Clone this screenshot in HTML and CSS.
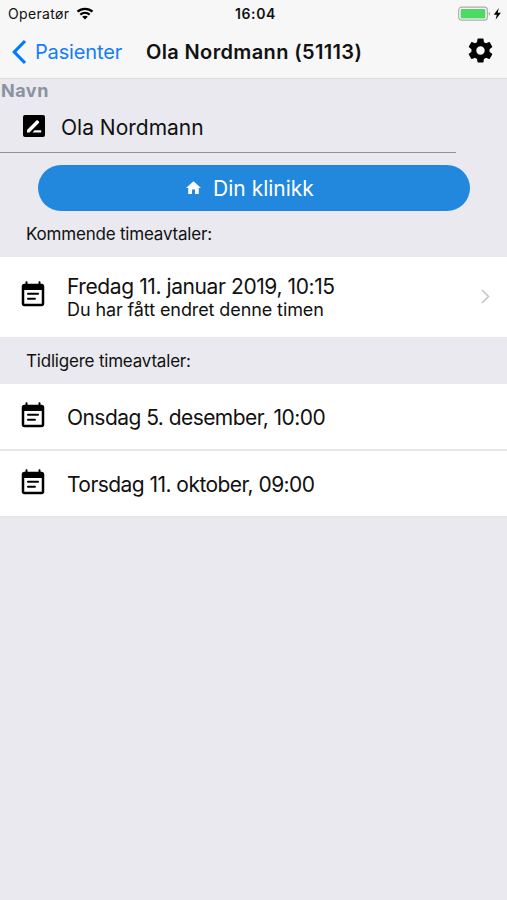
FILE: index.html
```html
<!DOCTYPE html>
<html lang="no">
<head>
  <meta charset="UTF-8" />
  <meta name="viewport" content="width=device-width, initial-scale=1" />
  <title>Ola Nordmann (51113)</title>
  <link rel="stylesheet" href="styles.css">
</head>
<body>

  <svg class="symbols">
    <symbol id="event" viewBox="0 0 24 24">
      <path d="M19 3h-1V1.6c0-.8-1.6-.8-1.6 0V3H7.6V1.6c0-.8-1.6-.8-1.6 0V3H5c-1.100 0-2 .9-2 2v14c0 1.100.9 2 2 2h14c1.100 0 2-.9 2-2V5c0-1.100-.9-2-2-2zm0 16H5V8h14z" />
      <path d="M8 11h8M8 15h5.500" stroke="#000" stroke-width="1.700" stroke-linecap="round" />
    </symbol>
  </svg>

  <header>
    <div class="status">
      <div class="carrier">
        <span class="operator">Operatør</span>
        <svg class="wifi" viewBox="0 0 18 13">
          <path d="M1.500 4.700C5.700.8 12.300.8 16.500 4.700M4.300 7.600c2.700-2.300 6.700-2.300 9.400 0" fill="none" stroke="#000" stroke-width="2.300" />
          <path d="M9 12.600 6.200 9.700c1.600-1.400 4-1.400 5.600 0z" />
        </svg>
      </div>
      <span class="clock">16:04</span>
      <svg class="battery" viewBox="0 0 45 16">
        <rect x=".7" y="1.200" width="28.600" height="13" rx="3" fill="#fff" stroke="#aaa" stroke-width="1.200" />
        <rect x="2.600" y="3" width="24.800" height="9.400" rx="1" fill="#4cd964" />
        <path d="M30.800 5.700c1.500.8 1.500 3.200 0 4z" fill="#999" />
        <path d="M40.800 2 35.800 8.700h3l-1.200 5 5.300-7h-3.200z" />
      </svg>
    </div>

    <nav>
      <a class="back" href="#">
        <svg viewBox="0 0 16 26"><path d="M14 2 3.300 13l10.700 11" fill="none" stroke="#007aff" stroke-width="3.200" /></svg>
        <span>Pasienter</span>
      </a>
      <h1>Ola Nordmann (51113)</h1>
      <svg class="settings" viewBox="0 0 24 24">
        <path d="M19.430 12.980c.04-.32.07-.64.07-.98s-.03-.66-.07-.98l2.110-1.650c.19-.15.24-.42.12-.64l-2-3.460c-.12-.22-.39-.3-.61-.22l-2.490 1c-.52-.4-1.080-.73-1.690-.98l-.38-2.650C14.460 2.180 14.250 2 14 2h-4c-.25 0-.46.18-.49.42l-.38 2.650c-.61.25-1.170.59-1.690.98l-2.490-1c-.23-.09-.49 0-.61.22l-2 3.460c-.13.22-.07.49.12.64l2.110 1.650c-.04.32-.07.65-.07.98s.03.66.07.98l-2.110 1.650c-.19.15-.24.42-.12.64l2 3.460c.12.22.39.3.61.22l2.490-1c.52.4 1.080.73 1.690.98l.38 2.650c.03.24.24.42.49.42h4c.25 0 .46-.18.49-.42l.38-2.650c.61-.25 1.170-.59 1.690-.98l2.490 1c.23.09.49 0 .61-.22l2-3.460c.12-.22.07-.49-.12-.64l-2.110-1.650zM12 15.500c-1.930 0-3.500-1.570-3.500-3.500s1.570-3.500 3.500-3.500 3.500 1.570 3.500 3.500-1.570 3.500-3.500 3.500z" />
      </svg>
    </nav>
  </header>

  <main>
    <div class="label">Navn</div>
    <div class="name">
      <svg viewBox="0 0 22 22">
        <rect width="22" height="22" rx="2" />
        <path d="M4 17.500v-2.600L13.400 5.500c.5-.5 1-.5 1.500 0l1 1c.5.5.5 1 0 1.500L6.500 17.500zM9.500 17.500l2.200-2.200h6.500v2.200z" fill="#fff" />
      </svg>
      <span>Ola Nordmann</span>
    </div>

    <button type="button">
      <svg viewBox="0 0 20 17"><path d="M8 17v-6h4v6h5V9h3L10 0 0 9h3v8z" fill="#fff" /></svg>
      <span>Din klinikk</span>
    </button>

    <h2 class="upcoming">Kommende timeavtaler:</h2>
    <div class="row row-large">
      <svg class="event"><use href="#event" /></svg>
      <div class="text">
        <div class="date date-upcoming">Fredag 11. januar 2019, 10:15</div>
        <div class="note">Du har fått endret denne timen</div>
      </div>
      <svg class="chevron" viewBox="0 0 9 15"><path d="m1 1 6.500 6.500L1 14" fill="none" stroke="#c7c7cc" stroke-width="1.700" /></svg>
    </div>

    <h2 class="previous">Tidligere timeavtaler:</h2>
    <div class="row">
      <svg class="event"><use href="#event" /></svg>
      <div class="date">Onsdag 5. desember, 10:00</div>
    </div>
    <div class="row">
      <svg class="event"><use href="#event" /></svg>
      <div class="date">Torsdag 11. oktober, 09:00</div>
    </div>
  </main>

</body>
</html>
```

FILE: styles.css
```css
* {
  box-sizing: border-box;
}

body {
  margin: 0;
  min-height: 100vh;
  background-color: #e9e9ef;
  font-family: Inter, "Liberation Sans", sans-serif;
  color: #111;
  white-space: nowrap;
}

svg {
  display: block;
  flex: none;
}

.symbols {
  width: 0;
  height: 0;
}

header {
  height: 79px;
  background-color: #f7f7f7;
  border-bottom: 1px solid #dcdcdf;
}

.status {
  display: grid;
  grid-template-columns: 1fr auto 1fr;
  align-items: center;
  height: 27px;
  padding: 0 4px 0 8px;
  font-size: 14px;
}

.carrier {
  display: flex;
  align-items: center;
  gap: 7px;
}

.operator {
  letter-spacing: 0.35px;
}

.wifi {
  width: 18px;
  height: 13px;
}

.clock {
  font-weight: 600;
  letter-spacing: 0.6px;
}

.battery {
  width: 45px;
  height: 16px;
  justify-self: end;
}

nav {
  display: flex;
  align-items: center;
  height: 50px;
  padding: 0 12px 0 11px;
}

.back {
  display: flex;
  align-items: center;
  gap: 8px;
  width: 135px;
  color: #137dfa;
  font-size: 20px;
  letter-spacing: -0.15px;
  text-decoration: none;
}

.back svg {
  width: 16px;
  height: 26px;
}

h1 {
  margin: 0;
  flex: 1;
  font-size: 20px;
  font-weight: 600;
  letter-spacing: 0.36px;
}

.settings {
  width: 29px;
  height: 29px;
  margin-bottom: 3px;
}

.label {
  height: 24px;
  padding-left: 1px;
  line-height: 24px;
  font-size: 18px;
  font-weight: 700;
  letter-spacing: 0.5px;
  color: #8a939f;
}

.name {
  display: flex;
  align-items: center;
  gap: 16px;
  width: 456px;
  height: 50px;
  padding-left: 23px;
  border-bottom: 1px solid #929298;
  font-size: 21px;
}

.name svg {
  width: 22px;
  height: 22px;
  margin-bottom: 4px;
}

button {
  display: flex;
  justify-content: center;
  align-items: center;
  gap: 12px;
  width: 432px;
  height: 46px;
  margin: 12px 0 0 38px;
  padding: 0 8px 0 0;
  border: none;
  border-radius: 23px;
  background-color: #2188dd;
  color: white;
  font-family: inherit;
  font-size: 21px;
}

button svg {
  width: 15px;
  height: 13px;
  margin-bottom: 2px;
}

h2 {
  height: 46px;
  margin: 0;
  padding-left: 26px;
  line-height: 46px;
  font-size: 17px;
  font-weight: 400;
  letter-spacing: -0.2px;
}

.previous {
  height: 47px;
  line-height: 48px;
}

.row {
  display: flex;
  align-items: center;
  gap: 19px;
  height: 67px;
  padding: 2px 17px 0 18px;
  background-color: white;
  border-bottom: 2px solid #e5e5ea;
  font-size: 21px;
}

.row-large {
  height: 80px;
  padding-top: 0;
  border: none;
}

.event {
  width: 30px;
  height: 30px;
  margin-bottom: 4px;
}

.text {
  flex: 1;
}

.date {
  line-height: 25px;
  letter-spacing: -0.55px;
}

.date-upcoming {
  letter-spacing: -0.41px;
}

.note {
  line-height: 22px;
  font-size: 18px;
  letter-spacing: -0.1px;
}

.chevron {
  width: 9px;
  height: 15px;
  margin-bottom: 2px;
}
```
